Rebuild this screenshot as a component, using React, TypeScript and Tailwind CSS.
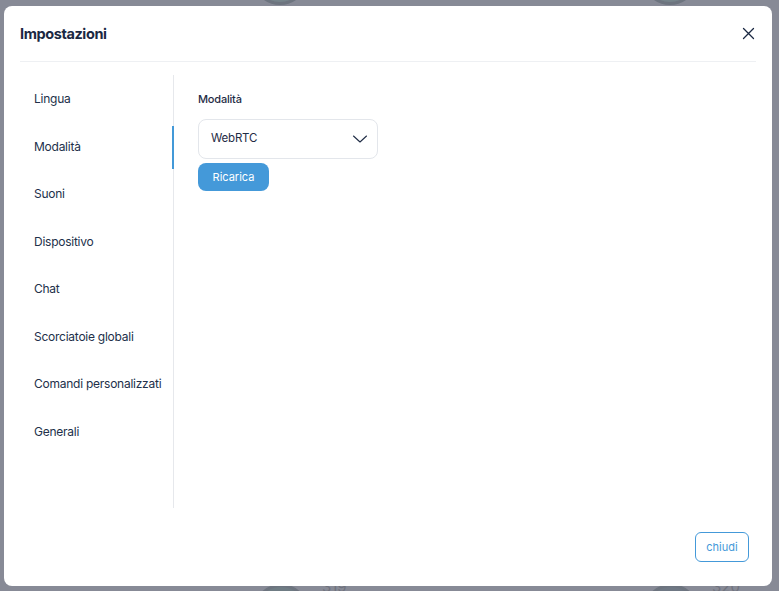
import React, { useState } from 'react';

const sections = [
    'Lingua',
    'Modalità',
    'Suoni',
    'Dispositivo',
    'Chat',
    'Scorciatoie globali',
    'Comandi personalizzati',
    'Generali',
];

const App = () => {
    const [active, setActive] = useState('Modalità');
    const [mode, setMode] = useState('WebRTC');

    return (
        <div
            className="relative h-[591px] w-full overflow-hidden bg-[#878a96] pt-[6px] pl-[4px]"
            style={{ fontFamily: 'Inter, "Noto Sans", sans-serif' }}
        >
            {/* faded tiles behind the overlay */}
            <div className="absolute left-[252px] top-[-51px] h-[56px] w-[56px] rounded-full border-[3px] border-[#6d747f] bg-[#75838a]" />
            <div className="absolute left-[642px] top-[-51px] h-[56px] w-[56px] rounded-full border-[3px] border-[#6d747f] bg-[#75838a]" />
            <div className="absolute left-[253px] top-[584px] h-[56px] w-[56px] rounded-full border-[3px] border-[#6d747f] bg-[#6f7c84]" />
            <div className="absolute left-[643px] top-[584px] h-[56px] w-[56px] rounded-full border-[3px] border-[#6d747f] bg-[#6f7884]" />
            <span className="absolute left-[322px] top-[578px] text-[15px] leading-[18px] text-[#70737e]">319</span>
            <span className="absolute left-[712px] top-[578px] text-[15px] leading-[18px] text-[#70737e]">320</span>

            {/* Modal */}
            <div className="relative flex h-[580px] w-[768px] flex-col rounded-[8px] bg-white text-[#1b2940]">
                <div className="mx-4 flex h-[56px] items-center justify-between border-b border-[#eef0f3]">
                    <h1 className="text-[14.5px] font-bold tracking-[-0.4px] text-[#1a2842]">Impostazioni</h1>
                    <button className="mr-[1px] text-[#1a2842]">
                        <svg width="13" height="13" viewBox="0 0 13 13" fill="none" stroke="currentColor" strokeWidth="1.3" strokeLinecap="round">
                            <path d="M1.5 1.5L11.5 11.5M11.5 1.5L1.5 11.5" />
                        </svg>
                    </button>
                </div>

                <div className="flex px-4 pt-[13px]">
                    {/* Sidebar */}
                    <div className="h-[433px] w-[154px] shrink-0 border-r border-[#e6e8ec]">
                        {sections.map((s) => (
                            <button
                                key={s}
                                onClick={() => setActive(s)}
                                className="relative flex h-[47.5px] w-full items-center pl-[14px] pt-[1px] text-left text-[12px] tracking-[-0.25px] text-[#22304a]"
                            >
                                {s}
                                {active === s && (
                                    <span className="absolute right-[-1px] top-[3px] h-[43px] w-[2px] bg-[#4399d8]" />
                                )}
                            </button>
                        ))}
                    </div>

                    {/* Content */}
                    <div className="flex flex-col items-start pl-[24px] pt-[16px]">
                        <label className="text-[11px] font-medium leading-[16px] tracking-[-0.2px] text-[#1f2c45]">Modalità</label>
                        <div className="mt-[12px] flex h-[40px] w-[180px] items-center justify-between rounded-[8px] border border-[#e3e6eb] pl-[12px] pr-[9px]">
                            <span className="text-[11.5px] tracking-[-0.2px] text-[#1f2c45]">{mode}</span>
                            <svg width="16" height="10" viewBox="0 0 16 10" fill="none" stroke="#1f2c45" strokeWidth="1.1" strokeLinecap="round" strokeLinejoin="round">
                                <path d="M1.5 2L8 8L14.5 2" />
                            </svg>
                        </div>
                        <button
                            onClick={() => setMode('WebRTC')}
                            className="mt-[4px] h-[28px] w-[71px] rounded-[8px] bg-[#4499d9] text-[11px] text-white"
                        >
                            Ricarica
                        </button>
                    </div>
                </div>

                <div className="flex justify-end pr-[23px] pt-[24px]">
                    <button className="h-[30px] w-[54px] rounded-[6px] border border-[#4499d9] text-[11px] text-[#4499d9]">
                        chiudi
                    </button>
                </div>
            </div>
        </div>
    );
};

export default App;
